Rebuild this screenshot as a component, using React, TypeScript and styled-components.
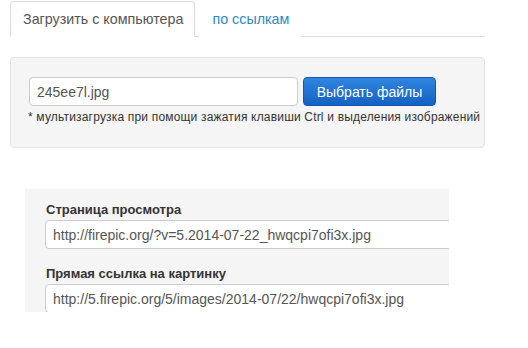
import React from "react";
import styled, { createGlobalStyle } from "styled-components";

const GlobalStyle = createGlobalStyle`
  html, body {
    margin: 0;
    padding: 0;
    background: #fff;
    font-family: "Liberation Sans", Arial, sans-serif;
  }
`;

const Page = styled.div`
  width: 528px;
  height: 348px;
  overflow: hidden;
`;

const TabBar = styled.div`
  display: flex;
  margin: 1px 43px 0 10px;
  border-bottom: 1px solid #ddd;
`;

const Tab = styled.div<{ $active?: boolean }>`
  height: 36px;
  box-sizing: border-box;
  padding: 0 11px 0 12px;
  margin-bottom: -1px;
  display: flex;
  align-items: center;
  font-size: 14.3px;
  color: ${(p) => (p.$active ? "#555" : "#2a8ac4")};
  background: #fff;
  border: 1px solid ${(p) => (p.$active ? "#ddd" : "transparent")};
  border-bottom-color: ${(p) => (p.$active ? "#fff" : "transparent")};
  border-radius: 4px 4px 0 0;
  margin-right: 4px;
`;

const UploadWell = styled.div`
  margin: 20px 43px 0 10px;
  height: 91px;
  box-sizing: border-box;
  padding: 19px 0 0 18px;
  background: #f5f5f5;
  border: 1px solid #e3e3e3;
  border-radius: 4px;
`;

const UploadRow = styled.div`
  display: flex;
  gap: 5px;
`;

const FileInput = styled.div<{ $width?: number }>`
  width: ${(p) => p.$width ?? 269}px;
  height: 29px;
  box-sizing: border-box;
  flex-shrink: 0;
  padding: 0 7px;
  display: flex;
  align-items: center;
  background: #fff;
  border: 1px solid #ccc;
  border-radius: 4px;
  font-size: 14px;
  color: #555;
  white-space: nowrap;
`;

const PickButton = styled.button`
  width: 133px;
  height: 29px;
  padding: 0;
  border: 1px solid #1457b3;
  border-radius: 4px;
  background: linear-gradient(#2f86e0, #1461c4);
  color: #fff;
  font-family: "Liberation Sans", Arial, sans-serif;
  font-size: 14px;
`;

const Hint = styled.div`
  margin: 4px 0 0 -1px;
  font-size: 12px;
  letter-spacing: 0.18px;
  color: #333;
  white-space: nowrap;
`;

const LinksWell = styled.div`
  margin: 41px 79px 0 25px;
  height: 123px;
  box-sizing: border-box;
  padding: 13px 0 0 20px;
  background: #f5f5f5;
  overflow: hidden;
`;

const LinkLabel = styled.div`
  font-size: 13px;
  font-weight: bold;
  color: #333;
  margin: 0 0 3px 1px;
`;

const LinkGroup = styled.div`
  & + & {
    margin-top: 17px;
  }
`;

export default function App() {
  return (
    <Page>
      <GlobalStyle />
      <TabBar>
        <Tab $active>Загрузить с компьютера</Tab>
        <Tab>по ссылкам</Tab>
      </TabBar>
      <UploadWell>
        <UploadRow>
          <FileInput>245ee7l.jpg</FileInput>
          <PickButton>Выбрать файлы</PickButton>
        </UploadRow>
        <Hint>
          * мультизагрузка при помощи зажатия клавиши Ctrl и выделения изображений
        </Hint>
      </UploadWell>
      <LinksWell>
        <LinkGroup>
          <LinkLabel>Страница просмотра</LinkLabel>
          <FileInput $width={430}>http://firepic.org/?v=5.2014-07-22_hwqcpi7ofi3x.jpg</FileInput>
        </LinkGroup>
        <LinkGroup>
          <LinkLabel>Прямая ссылка на картинку</LinkLabel>
          <FileInput $width={430}>http://5.firepic.org/5/images/2014-07/22/hwqcpi7ofi3x.jpg</FileInput>
        </LinkGroup>
      </LinksWell>
    </Page>
  );
}
